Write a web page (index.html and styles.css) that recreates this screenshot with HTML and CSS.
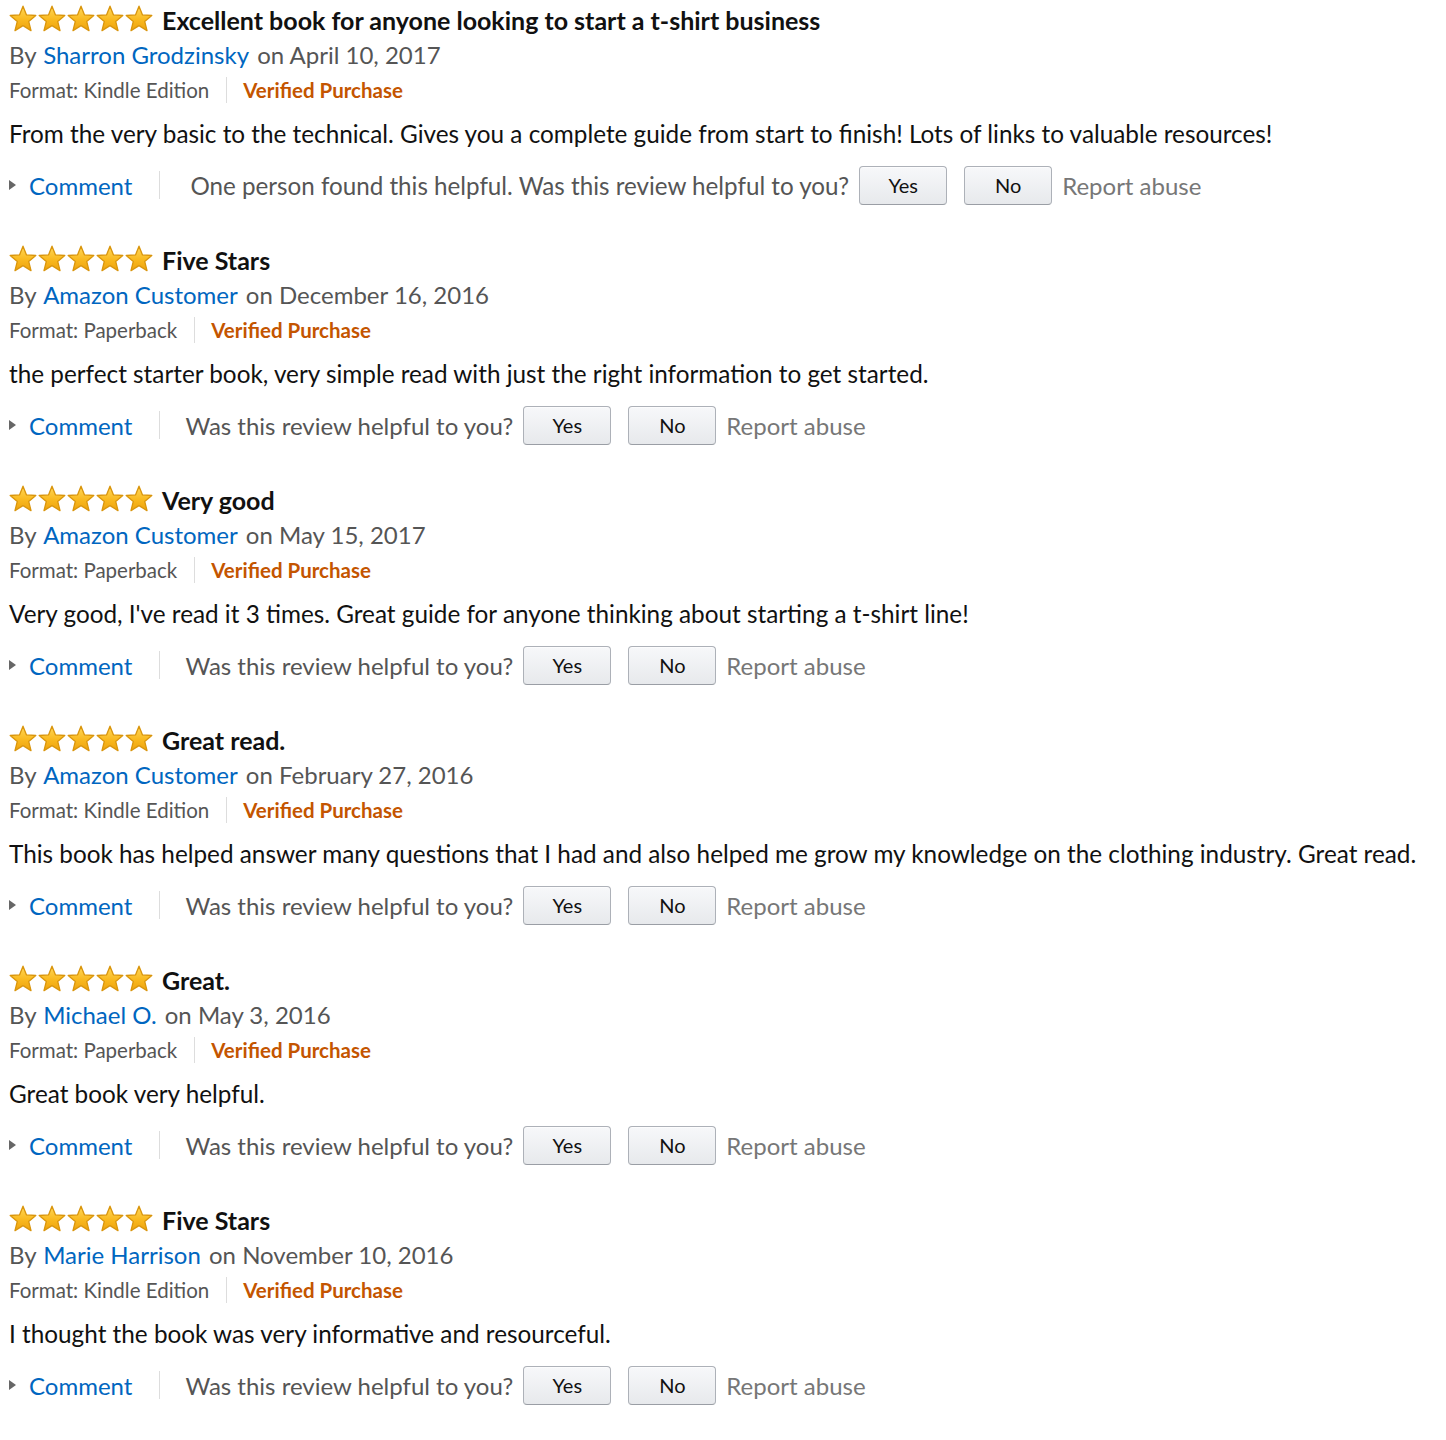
FILE: index.html
```html
<!DOCTYPE html>
<html>
<head>
<meta charset="utf-8">
<link rel="stylesheet" href="styles.css">
</head>
<body>
<svg width="0" height="0" class="defs" aria-hidden="true">
  <defs>
    <linearGradient id="gold" x1="0" y1="0" x2="0" y2="1">
      <stop offset="0" stop-color="#ffd85a"/>
      <stop offset="0.55" stop-color="#f9b91f"/>
      <stop offset="1" stop-color="#eea30e"/>
    </linearGradient>
    <symbol id="star" viewBox="0 0 28 28">
      <polygon points="14,1.2 17.5,9.9 26.8,10.5 19.7,16.4 22,25.6 14,20.6 6,25.6 8.3,16.4 1.2,10.5 10.5,9.9" fill="url(#gold)" stroke="#d9950c" stroke-width="1.3" stroke-linejoin="round"/>
    </symbol>
  </defs>
</svg>

<div class="reviews">

  <div class="review">
    <div class="title-row">
      <svg class="stars" width="145" height="28" viewBox="0 0 145 28"><use href="#star" x="0" width="28" height="28"/><use href="#star" x="29" width="28" height="28"/><use href="#star" x="58" width="28" height="28"/><use href="#star" x="87" width="28" height="28"/><use href="#star" x="116" width="28" height="28"/></svg>
      <span class="title">Excellent book for anyone looking to start a t-shirt business</span>
    </div>
    <div class="byline">By <a class="author">Sharron Grodzinsky</a> on April 10, 2017</div>
    <div class="format-row"><span class="format">Format: Kindle Edition</span><span class="vsep"></span><span class="verified">Verified Purchase</span></div>
    <div class="body">From the very basic to the technical. Gives you a complete guide from start to finish! Lots of links to valuable resources!</div>
    <div class="actions">
      <span class="caret"></span><a class="comment">Comment</a><span class="asep"></span>
      <span class="helpful first">One person found this helpful. Was this review helpful to you?</span>
      <button class="btn">Yes</button><button class="btn">No</button>
      <span class="report">Report abuse</span>
    </div>
  </div>

  <div class="review">
    <div class="title-row">
      <svg class="stars" width="145" height="28" viewBox="0 0 145 28"><use href="#star" x="0" width="28" height="28"/><use href="#star" x="29" width="28" height="28"/><use href="#star" x="58" width="28" height="28"/><use href="#star" x="87" width="28" height="28"/><use href="#star" x="116" width="28" height="28"/></svg>
      <span class="title">Five Stars</span>
    </div>
    <div class="byline">By <a class="author">Amazon Customer</a> on December 16, 2016</div>
    <div class="format-row"><span class="format">Format: Paperback</span><span class="vsep"></span><span class="verified">Verified Purchase</span></div>
    <div class="body">the perfect starter book, very simple read with just the right information to get started.</div>
    <div class="actions">
      <span class="caret"></span><a class="comment">Comment</a><span class="asep"></span>
      <span class="helpful">Was this review helpful to you?</span>
      <button class="btn">Yes</button><button class="btn">No</button>
      <span class="report">Report abuse</span>
    </div>
  </div>

  <div class="review">
    <div class="title-row">
      <svg class="stars" width="145" height="28" viewBox="0 0 145 28"><use href="#star" x="0" width="28" height="28"/><use href="#star" x="29" width="28" height="28"/><use href="#star" x="58" width="28" height="28"/><use href="#star" x="87" width="28" height="28"/><use href="#star" x="116" width="28" height="28"/></svg>
      <span class="title">Very good</span>
    </div>
    <div class="byline">By <a class="author">Amazon Customer</a> on May 15, 2017</div>
    <div class="format-row"><span class="format">Format: Paperback</span><span class="vsep"></span><span class="verified">Verified Purchase</span></div>
    <div class="body">Very good, I've read it 3 times. Great guide for anyone thinking about starting a t-shirt line!</div>
    <div class="actions">
      <span class="caret"></span><a class="comment">Comment</a><span class="asep"></span>
      <span class="helpful">Was this review helpful to you?</span>
      <button class="btn">Yes</button><button class="btn">No</button>
      <span class="report">Report abuse</span>
    </div>
  </div>

  <div class="review">
    <div class="title-row">
      <svg class="stars" width="145" height="28" viewBox="0 0 145 28"><use href="#star" x="0" width="28" height="28"/><use href="#star" x="29" width="28" height="28"/><use href="#star" x="58" width="28" height="28"/><use href="#star" x="87" width="28" height="28"/><use href="#star" x="116" width="28" height="28"/></svg>
      <span class="title">Great read.</span>
    </div>
    <div class="byline">By <a class="author">Amazon Customer</a> on February 27, 2016</div>
    <div class="format-row"><span class="format">Format: Kindle Edition</span><span class="vsep"></span><span class="verified">Verified Purchase</span></div>
    <div class="body">This book has helped answer many questions that I had and also helped me grow my knowledge on the clothing industry. Great read.</div>
    <div class="actions">
      <span class="caret"></span><a class="comment">Comment</a><span class="asep"></span>
      <span class="helpful">Was this review helpful to you?</span>
      <button class="btn">Yes</button><button class="btn">No</button>
      <span class="report">Report abuse</span>
    </div>
  </div>

  <div class="review">
    <div class="title-row">
      <svg class="stars" width="145" height="28" viewBox="0 0 145 28"><use href="#star" x="0" width="28" height="28"/><use href="#star" x="29" width="28" height="28"/><use href="#star" x="58" width="28" height="28"/><use href="#star" x="87" width="28" height="28"/><use href="#star" x="116" width="28" height="28"/></svg>
      <span class="title">Great.</span>
    </div>
    <div class="byline">By <a class="author">Michael O.</a> on May 3, 2016</div>
    <div class="format-row"><span class="format">Format: Paperback</span><span class="vsep"></span><span class="verified">Verified Purchase</span></div>
    <div class="body">Great book very helpful.</div>
    <div class="actions">
      <span class="caret"></span><a class="comment">Comment</a><span class="asep"></span>
      <span class="helpful">Was this review helpful to you?</span>
      <button class="btn">Yes</button><button class="btn">No</button>
      <span class="report">Report abuse</span>
    </div>
  </div>

  <div class="review">
    <div class="title-row">
      <svg class="stars" width="145" height="28" viewBox="0 0 145 28"><use href="#star" x="0" width="28" height="28"/><use href="#star" x="29" width="28" height="28"/><use href="#star" x="58" width="28" height="28"/><use href="#star" x="87" width="28" height="28"/><use href="#star" x="116" width="28" height="28"/></svg>
      <span class="title">Five Stars</span>
    </div>
    <div class="byline">By <a class="author">Marie Harrison</a> on November 10, 2016</div>
    <div class="format-row"><span class="format">Format: Kindle Edition</span><span class="vsep"></span><span class="verified">Verified Purchase</span></div>
    <div class="body">I thought the book was very informative and resourceful.</div>
    <div class="actions">
      <span class="caret"></span><a class="comment">Comment</a><span class="asep"></span>
      <span class="helpful">Was this review helpful to you?</span>
      <button class="btn">Yes</button><button class="btn">No</button>
      <span class="report">Report abuse</span>
    </div>
  </div>

</div>
</body>
</html>
```
FILE: styles.css
```css
html, body {
  margin: 0;
  padding: 0;
  background: #fff;
}
body {
  font-family: Lato, "Open Sans", sans-serif;
  color: #111;
}
.defs {
  position: absolute;
  width: 0;
  height: 0;
  overflow: hidden;
}
.reviews {
  padding-left: 9px;
}
.review {
  display: flex;
  flex-direction: column;
  padding-top: 2px;
  height: 238px;
}
.title-row {
  display: flex;
  align-items: center;
  height: 35px;
}
.stars {
  display: block;
  margin-bottom: 1px;
  margin-right: 8px;
  flex: none;
}
.title {
  font-weight: 700;
  font-size: 25px;
  color: #111;
  white-space: nowrap;
}
.byline {
  font-size: 24px;
  line-height: 36px;
  height: 36px;
  color: #555;
  white-space: nowrap;
}
.author {
  color: #0066c0;
  margin: 0 2px 0 1px;
  text-decoration: none;
}
.format-row {
  display: flex;
  align-items: center;
  height: 34px;
  white-space: nowrap;
}
.format {
  font-size: 20.5px;
  color: #555;
}
.vsep {
  width: 1px;
  height: 26px;
  background: #ddd;
  margin: 0 16px 0 17px;
}
.verified {
  font-size: 20.5px;
  font-weight: 700;
  color: #c45500;
}
.body {
  margin-top: 9px;
  font-size: 24.3px;
  line-height: 36px;
  color: #111;
  white-space: nowrap;
}
.actions {
  margin-top: 13px;
  display: flex;
  align-items: center;
  height: 40px;
  white-space: nowrap;
}
.caret {
  width: 0;
  height: 0;
  border-left: 7px solid #666;
  border-top: 5px solid transparent;
  border-bottom: 5px solid transparent;
  margin: 0 13px 0 0;
}
.comment {
  font-size: 24px;
  color: #0066c0;
  text-decoration: none;
}
.asep {
  width: 1px;
  height: 28px;
  background: #ddd;
  margin: 0 25px 0 27px;
}
.helpful {
  font-size: 24px;
  color: #555;
}
.helpful.first {
  font-size: 24.2px;
  margin-left: 5px;
}
.btn {
  box-sizing: border-box;
  width: 88px;
  height: 39px;
  margin-left: 10px;
  margin-right: 7px;
  padding: 0;
  border: 1px solid #adb1b8;
  border-bottom-color: #9a9ea5;
  border-radius: 4px;
  background: linear-gradient(to bottom, #f7f8fa, #e7e9ec);
  box-shadow: inset 0 1px 0 rgba(255,255,255,0.6);
  font-family: Lato, "Open Sans", sans-serif;
  font-size: 20px;
  color: #111;
}
.btn + .btn {
  margin-right: 0;
}
.report {
  margin-left: 10px;
  font-size: 24px;
  color: #777;
}
```
